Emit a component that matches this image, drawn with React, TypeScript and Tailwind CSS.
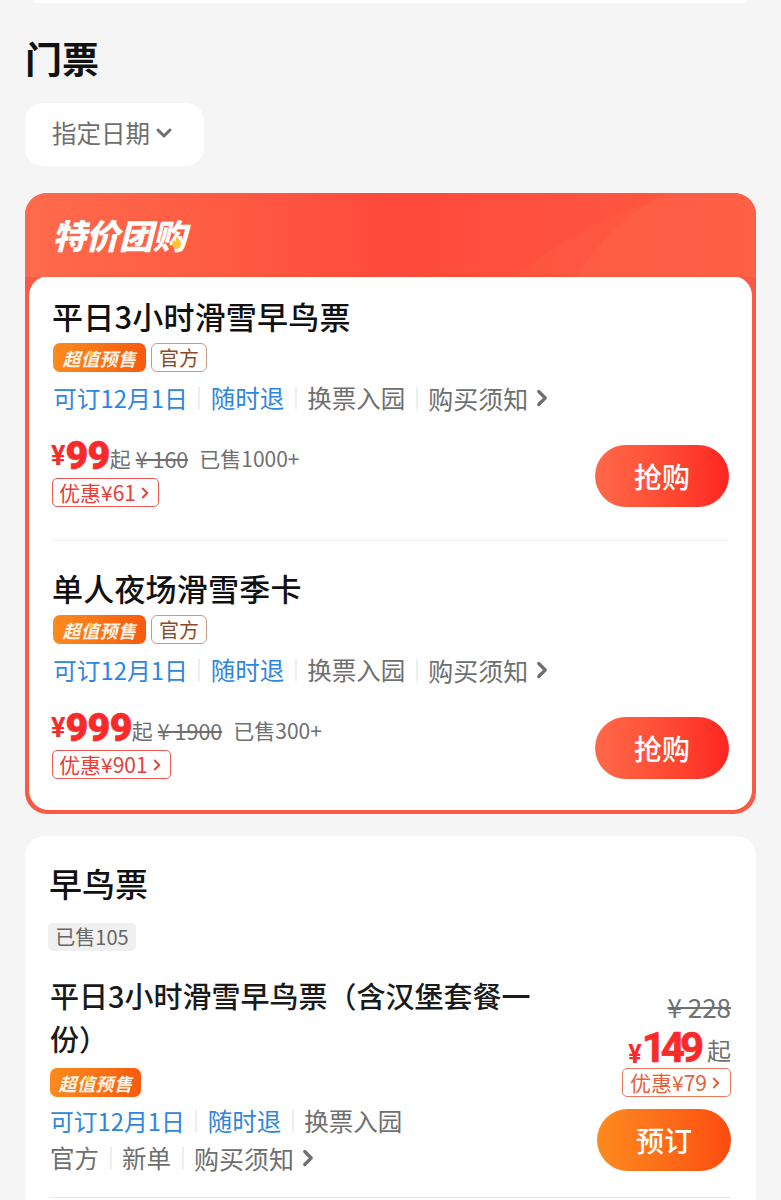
import { ChevronDown, ChevronRight } from 'lucide-react'

const cjk = { fontFamily: '"Noto Sans CJK SC", "Noto Sans", sans-serif' }
const num = { fontFamily: 'Roboto, "Noto Sans CJK SC", sans-serif' }

function Sep() {
  return <span className="mx-[10.5px] h-[22px] w-[2px] bg-[#eeeeee]" />
}

function Flame({ className }: { className: string }) {
  return (
    <svg viewBox="0 0 12 14" className={className}>
      <path d="M6 0c.6 2.4 4.8 4.6 4.8 8.6A4.8 5 0 0 1 6 14a4.8 5 0 0 1-4.8-5.2C1.200 6.600 2.600 5.600 3.200 4c.8.800 1.200 1.400 1.400 2.200C5.600 4.600 6.300 2.600 6 0z" fill="#ffc233" />
    </svg>
  )
}

function ValueTag({ narrow }: { narrow?: boolean }) {
  return (
    <span className={`relative flex h-[29px] items-center justify-center rounded-[7px] bg-gradient-to-r from-[#fb8a1e] to-[#f8590f] text-[18px] leading-none font-bold tracking-[0.5px] text-[#fff3e6] italic ${narrow ? 'w-[91px]' : 'w-[93px]'}`}>
      超值预售
      <Flame className="absolute top-[6px] left-[35px] h-[8px] w-[6px]" />
    </span>
  )
}

function MetaRow() {
  return (
    <div className="mt-[10px] flex h-[32px] items-center text-[24.5px] leading-none text-[#6f6f6f]">
      <span className="text-[23.8px] text-[#2f86dc]">可订12月1日</span>
      <Sep />
      <span className="text-[#2f86dc]">随时退</span>
      <Sep />
      <span>换票入园</span>
      <Sep />
      <span className="text-[25px]">购买须知</span>
      <ChevronRight className="ml-[1px] h-[26px] w-[26px] text-[#6f6f6f]" strokeWidth={3} />
    </div>
  )
}

function Deal({
  name,
  price,
  oldPrice,
  sold,
  save,
  last,
}: {
  name: string
  price: string
  oldPrice: string
  sold: string
  save: string
  last?: boolean
}) {
  return (
    <div className={last ? 'pt-[25px] pb-[31px]' : 'border-b border-[#f2f2f2] pt-[18px] pb-[33px]'}>
      <h3 className="-ml-px h-[44px] text-[31px] leading-[44px] font-medium tracking-[0.2px] text-[#111111]">{name}</h3>
      <div className="mt-[5px] flex gap-[5px]">
        <ValueTag />
        <span className="flex h-[29px] w-[56px] items-center justify-center rounded-[6px] border border-[#c99b85] text-[20px] leading-none text-[#8b4a2c]">
          官方
        </span>
      </div>
      <MetaRow />
      <div className="mt-[19px] flex items-end justify-between">
        <div className="-ml-[2px]">
          <div className="flex h-[40px] items-end text-[#707070]">
            <span className="mb-[3px] text-[27px] leading-none font-bold text-[#fb2a2a]" style={num}>¥</span>
            <span className="-mb-[3px] text-[39px] leading-[40px] font-black tracking-[-0.5px] text-[#fb2a2a] [-webkit-text-stroke:0.7px_#fb2a2a]" style={num}>{price}</span>
            <span className="mb-[4px] text-[21px] leading-none">起</span>
            <span className="mb-[4px] ml-[5px] text-[21.500px] leading-none line-through">{oldPrice}</span>
            <span className="mb-[4px] ml-[11px] text-[21px] leading-none">{sold}</span>
          </div>
          <span className="mt-[5px] ml-px flex h-[29px] w-fit items-center rounded-[5px] border border-[#ee5a52] pr-[4px] pl-[6px] text-[21px] leading-none text-[#e8403a]">
            {save}
            <ChevronRight className="h-[18px] w-[18px]" strokeWidth={2.5} />
          </span>
        </div>
        <button className="h-[62px] w-[134px] rounded-full bg-gradient-to-r from-[#ff6848] to-[#fd2320] text-[28px] font-medium text-white">
          抢购
        </button>
      </div>
    </div>
  )
}

export default function App() {
  return (
    <div className="h-[1200px] overflow-hidden bg-[#f5f5f5] px-[25px]" style={cjk}>
      <div className="mx-[9px] h-[3px] rounded-b-[10px] bg-white" />

      <h1 className="mt-[32px] text-[37px] leading-[46px] font-bold text-[#111111]">门票</h1>

      <button className="mt-[22px] flex h-[63px] w-[179px] items-center rounded-[18px] bg-white pb-[3px] pl-[27px] text-[24.5px] text-[#6f6f6f]">
        指定日期
        <ChevronDown className="ml-[2px] h-[24px] w-[24px]" strokeWidth={3} />
      </button>

      <section className="mt-[27px] overflow-hidden rounded-[22px] bg-[#fa5a45] px-[4px] pb-[4px]">
        <div className="relative -mx-[4px] flex h-[84px] items-center overflow-hidden bg-gradient-to-r from-[#ff6b4c] via-[#fe4a3a] to-[#ff5a42] pl-[27px]">
          <svg viewBox="0 0 240 84" className="absolute top-0 right-0 h-[84px] w-[240px]">
            <path d="M0 84C40 50 100 14 170 0h70v84z" fill="#ff6a4c" fillOpacity="0.2" />
            <path d="M62 84C80 50 110 20 150 0h90v84z" fill="#ff6a4c" fillOpacity="0.3" />
          </svg>
          <span className="relative text-[34px] leading-none font-black tracking-[-0.5px] text-white italic">特价团购</span>
          <Flame className="absolute top-[43px] left-[146px] h-[13px] w-[11px]" />
        </div>
        <div className="-mt-px rounded-[20px] bg-white pr-[23px] pl-[24px]">
          <Deal name="平日3小时滑雪早鸟票" price="99" oldPrice="¥ 160" sold="已售1000+" save="优惠¥61" />
          <Deal name="单人夜场滑雪季卡" price="999" oldPrice="¥ 1900" sold="已售300+" save="优惠¥901" last />
        </div>
      </section>

      <section className="mt-[22px] rounded-[20px] bg-white px-[25px] pt-[24px] pb-[20px]">
        <h2 className="-ml-px text-[33px] leading-[46px] font-medium text-[#111111]">早鸟票</h2>
        <span className="mt-[17px] -ml-[2px] flex h-[28px] w-[88px] items-center justify-center rounded-[5px] bg-[#f0f0f0] text-[20px] leading-none text-[#666666]">
          已售105
        </span>
        <div className="mt-[23px] flex justify-between border-b border-[#e6e6e6] pb-[23px]">
          <div className="w-[490px]">
            <h3 className="text-[29px] leading-[43px] font-medium text-[#1a1a1a]">平日3小时滑雪早鸟票（含汉堡套餐一份）</h3>
            <div className="mt-[8px]">
              <ValueTag narrow />
            </div>
            <div className="mt-[8px] flex h-[32px] items-center text-[24.5px] leading-none text-[#6f6f6f]">
              <span className="text-[23.8px] text-[#2f86dc]">可订12月1日</span>
              <Sep />
              <span className="text-[#2f86dc]">随时退</span>
              <Sep />
              <span>换票入园</span>
            </div>
            <div className="mt-[5px] flex h-[32px] items-center text-[24.5px] leading-none text-[#6f6f6f]">
              <span>官方</span>
              <Sep />
              <span>新单</span>
              <Sep />
              <span className="text-[25px]">购买须知</span>
              <ChevronRight className="ml-[1px] h-[26px] w-[26px]" strokeWidth={3} />
            </div>
          </div>
          <div className="flex flex-col items-end pt-[18px]">
            <span className="text-[26px] leading-[30px] text-[#707070] line-through">¥ 228</span>
            <div className="mt-[7px] flex h-[38px] items-end text-[#707070]">
              <span className="text-[25px] leading-none font-bold text-[#fb2a2a]" style={num}>¥</span>
              <span className="text-[42px] leading-[38px] font-bold tracking-[-5px] text-[#fb2a2a] [-webkit-text-stroke:0.7px_#fb2a2a]" style={num}>149</span>
              <span className="mb-[5px] ml-[8px] text-[24px] leading-none">起</span>
            </div>
            <span className="mt-[1px] flex h-[29px] items-center rounded-[5px] border border-[#ee7a5c] pr-[5px] pl-[7px] text-[21px] leading-none text-[#e8603a]">
              优惠¥79
              <ChevronRight className="h-[18px] w-[18px]" strokeWidth={2.5} />
            </span>
            <button className="mt-[12px] h-[62px] w-[134px] rounded-full bg-gradient-to-r from-[#fd8a20] to-[#fb4a10] text-[28px] font-medium text-white">
              预订
            </button>
          </div>
        </div>
      </section>
    </div>
  )
}
